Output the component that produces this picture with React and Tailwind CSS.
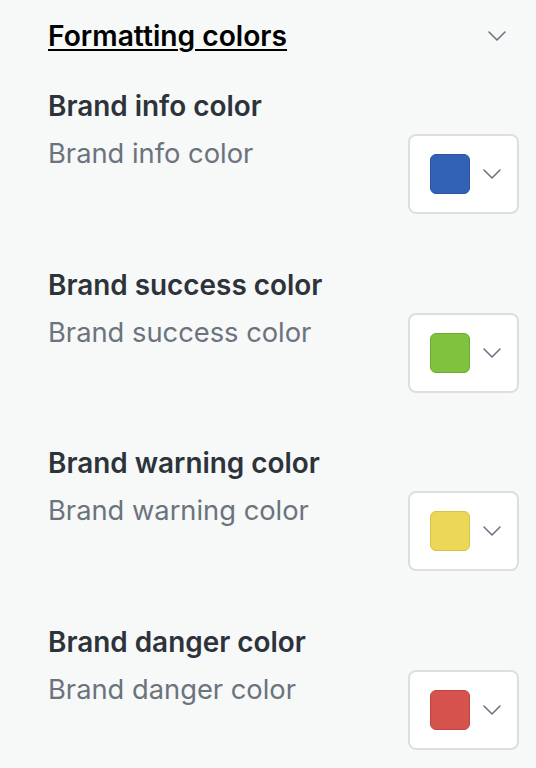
const colors = [
  { name: 'Brand info color', fill: 'bg-[#3162b6]', ring: 'border-[#2a55a0]' },
  { name: 'Brand success color', fill: 'bg-[#80c13d]', ring: 'border-[#6eab31]' },
  { name: 'Brand warning color', fill: 'bg-[#ecd856]', ring: 'border-[#d6c247]' },
  { name: 'Brand danger color', fill: 'bg-[#d6524c]', ring: 'border-[#bf4641]' },
];

const Chevron = ({ className }) => (
  <svg viewBox="0 0 18 10" className={className} fill="none" stroke="currentColor" strokeWidth="1.6" strokeLinecap="round" strokeLinejoin="round">
    <path d="M1 1l8 8 8-8" />
  </svg>
);

const App = () => {
  return (
    <div className="min-h-[768px] w-[536px] bg-[#f7f8f8] pl-12 pr-[17px] pt-5 font-['Inter',sans-serif]">
      {/* Section header */}
      <div className="flex items-center justify-between h-8">
        <h2 className="text-[28.2px] leading-8 font-semibold text-black underline underline-offset-[3px] decoration-2">
          Formatting colors
        </h2>
        <Chevron className="w-[18px] h-[10px] text-[#6b7280] mr-[13px]" />
      </div>

      <div className="flex flex-col gap-[54.67px] mt-[38px]">
        {colors.map((c) => (
          <div key={c.name} className="flex items-start justify-between">
            <div>
              <div className="text-[27.9px] leading-8 font-semibold text-[#2d333a]">{c.name}</div>
              <div className="text-[27.3px] leading-8 mt-[16px] text-[#6b737d]">{c.name}</div>
            </div>
            <button className="mt-[44px] w-[111px] h-[80px] bg-white border-2 border-[#dcdee0] rounded-lg flex items-center pl-[20px]">
              <span className={`w-10 h-10 rounded-md border ${c.fill} ${c.ring}`} />
              <Chevron className="w-[18px] h-[10px] text-[#6b7280] ml-[13px]" />
            </button>
          </div>
        ))}
      </div>
    </div>
  );
};

export default App;
